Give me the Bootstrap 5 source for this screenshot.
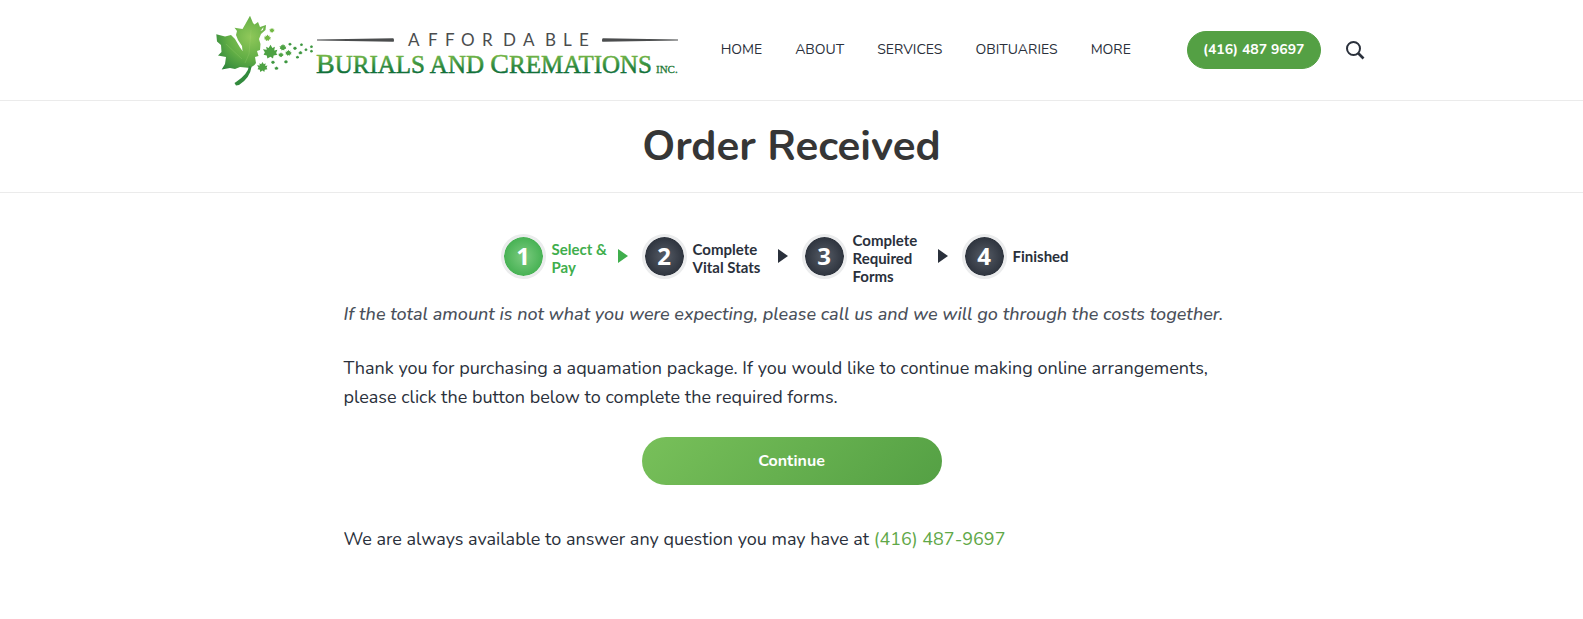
<!DOCTYPE html>
<html lang="en">
<head>
<meta charset="utf-8">
<meta name="viewport" content="width=device-width, initial-scale=1">
<title>Order Received - Affordable Burials and Cremations</title>
<link rel="stylesheet" href="https://cdn.jsdelivr.net/npm/bootstrap@5.3.0/dist/css/bootstrap.min.css">
<style>
  body { font-family: Nunito, "Open Sans", sans-serif; font-size: 18px; line-height: 29px; color: #2a303b; }
  .site-header, .page-title { border-bottom: 1px solid #ebebeb; }
  .header-inner { max-width: 1152px; min-height: 100px; }
  .logo-art { width: 464px; height: 72px; max-width: 100%; }
  .menu { gap: 33px; }
  .menu .nav-link { font-size: 14px; line-height: 20px; color: #2a303b; padding: 0; }
  .header-tools { gap: 24px; margin-left: 56px; margin-right: 3px; }
  .phone-btn { background: #54a044; color: #fff; font-size: 14px; font-weight: 700; line-height: 20px; padding: 8px 15px; border: 1px solid #54a044; }
  .search-btn { color: #2a303b; line-height: 0; }
  .page-title { padding: 22px 0 21px; }
  .page-title h1 { font-size: 42px; line-height: 48px; font-weight: 700; color: #363636; }
  .content { max-width: 896px; padding-top: 34px; }
  .steps { margin-bottom: 15px; }
  .step-no { width: 45px; height: 45px; border: 3px solid #ebeced; color: #fff; font: 700 24px/1 "Open Sans", sans-serif; background: radial-gradient(#565c66, #282e38 70%) border-box; background-clip: padding-box; margin-right: 6px; }
  .step-label { font: 700 15px/18px Lato, sans-serif; width: 85px; padding-top: 4px; }
  .step-label.narrow { width: 66px; }
  .step-label.last { width: 70px; padding-top: 0; }
  .step-now { color: #3fae4d; }
  .step-now .step-no { background-image: radial-gradient(#7ccb80, #3fae4d 70%); }
  .arrow { border-left: 10px solid; border-top: 7px solid transparent; border-bottom: 7px solid transparent; margin-right: 14px; }
  .note { color: #4a505a; font-weight: 500; }
  .copy { margin-bottom: 25px; }
  .continue-btn { width: 300px; height: 48px; color: #fff; font-size: 16px; font-weight: 700; border: 0; background: linear-gradient(135deg, #78c05a, #54a044); margin-bottom: 40px; }
  .continue-btn:hover, .phone-btn:hover { color: #fff; background: #478a3a; }
  .tel-link { color: #5fa848; }
</style>
</head>
<body>
<header class="site-header">
  <div class="header-inner container-fluid px-0 d-flex flex-wrap align-items-center">
    <a href="#" class="d-block lh-1" aria-label="Affordable Burials and Cremations Inc.">
      <svg class="logo-art d-block" viewBox="0 0 464 72">
        <defs>
          <radialGradient id="leaf" gradientUnits="userSpaceOnUse" cx="34" cy="23" r="44">
            <stop offset="0" stop-color="#90c85a"/><stop offset=".5" stop-color="#62ae45"/><stop offset="1" stop-color="#267f3b"/>
          </radialGradient>
          <linearGradient id="word" gradientUnits="userSpaceOnUse" x1="0" y1="40" x2="0" y2="60">
            <stop offset="0" stop-color="#7dbb47"/><stop offset=".45" stop-color="#3f9741"/><stop offset="1" stop-color="#0b6a38"/>
          </linearGradient>
          <path id="bit" d="M0-5l1.500 2.500 2-1-.5 3 2.500-.5-1 2.500 1 1.500-3 .5-.5 2.500-2-1.500-2.500 1.500-.5-2.500-2.500-.5 1-2-1.500-2.500 3 .5-.5-2.500 2 1z"/>
        </defs>
        <path fill="url(#leaf)" d="M34 1.700L37 9l1.500 1.500L42 8l2 5 6-2-.5 5-4.500 4-2 5 1.500 5-.5 6-3 1 1.500 5-3.500 1 1 6-1.500 2-4.500 3-2-.3-8-.7-5 2-5-1-8.300 1.500L9 50l1-7-8-1.500L5.500 38 5 31 1 27.500.3 20.300 9 22.500l6-1.500 4 4 5 8.500 2.500 3.500-.5-5-4-6-2-5 1-4-2.500-3.300L26.500 15l3.200-5.500z"/>
        <path d="M35 16l-2 24-4 9M10 30l16 15" fill="none" stroke="#a4d277" stroke-width=".5" opacity=".5"/>
        <path fill="#328a3d" d="M33 52q-1 8-13 16l-1.500 1 1.500 2.500 3-.5q11-7 12.500-18z"/>
        <path d="M47.500 13l-3 4 2.500-1z" fill="#fff"/>
        <g fill="#72b843">
          <use href="#bit" transform="translate(56 16) scale(.45)"/>
          <use href="#bit" transform="translate(51.500 23.500) scale(.6)"/>
        </g>
        <g fill="#4da243">
          <use href="#bit" transform="translate(54.500 37) scale(1.250)"/>
          <use href="#bit" transform="translate(67 33) scale(.6)"/>
          <use href="#bit" transform="translate(65 40.500) scale(.45)"/>
          <use href="#bit" transform="translate(72.500 38.500) scale(.55)"/>
          <use href="#bit" transform="translate(46.500 52.500) scale(.9)"/>
        </g>
        <g fill="#3c963f">
          <use href="#bit" transform="translate(57 48) scale(.35)"/>
          <use href="#bit" transform="translate(60.500 54) scale(.35)"/>
          <use href="#bit" transform="translate(70 47.500) scale(.35)"/>
          <use href="#bit" transform="translate(74 30) scale(.3)"/>
          <use href="#bit" transform="translate(79 34) scale(.35)"/>
          <use href="#bit" transform="translate(81.500 43) scale(.3)"/>
          <use href="#bit" transform="translate(84.500 38.500) scale(.35)"/>
          <use href="#bit" transform="translate(85.500 30.500) scale(.28)"/>
          <use href="#bit" transform="translate(90 35.500) scale(.28)"/>
          <use href="#bit" transform="translate(95.500 32.500) scale(.28)"/>
          <use href="#bit" transform="translate(95.500 37) scale(.28)"/>
        </g>
        <path d="M101 25.600L177 24.200q1 0 1 2t-1 1.500L101 26.400zM462 25.600L387 24.200q-1 0-1 2t1 1.500L462 26.400z" fill="#4b4d4e"/>
        <text y="32" x="192 212 229 245 266 287 307 329 347 363" font-family="Lato, sans-serif" font-size="17" font-weight="400" fill="#4b4d4e">AFFORDABLE</text>
        <text x="100" y="59" font-family="Liberation Serif, serif" font-size="28" fill="url(#word)" stroke="url(#word)" stroke-width=".5">B<tspan font-size="25">URIALS AND </tspan>C<tspan font-size="25">REMATIONS</tspan></text>
        <text x="440" y="59" font-family="Liberation Serif, serif" font-size="11" fill="#1f7a3a" stroke="#1f7a3a" stroke-width=".3">INC.</text>
      </svg>
    </a>
    <nav class="menu nav ms-auto" aria-label="Main">
      <a class="nav-link" href="#">HOME</a>
      <a class="nav-link" href="#">ABOUT</a>
      <a class="nav-link" href="#">SERVICES</a>
      <a class="nav-link" href="#">OBITUARIES</a>
      <a class="nav-link" href="#">MORE</a>
    </nav>
    <div class="header-tools d-flex align-items-center">
      <a class="phone-btn btn rounded-pill" href="tel:4164879697">(416) 487 9697</a>
      <button class="search-btn btn p-0 border-0" type="button" aria-label="Search">
        <svg width="20" height="20" viewBox="0 0 20 20" fill="none" stroke="currentColor"><circle cx="8.500" cy="8.500" r="6.500" stroke-width="2"/><path d="M13 13l5.500 5.500" stroke-width="2.600"/></svg>
      </button>
    </div>
  </div>
</header>
<section class="page-title text-center">
  <h1 class="m-0">Order Received</h1>
</section>
<main class="content container-fluid px-0">
  <div class="steps d-flex flex-wrap justify-content-center">
    <div class="step-now d-flex align-items-center">
      <span class="step-no rounded-circle d-flex align-items-center justify-content-center">1</span>
      <span class="step-label narrow">Select &amp; Pay</span>
      <span class="arrow"></span>
    </div>
    <div class="d-flex align-items-center">
      <span class="step-no rounded-circle d-flex align-items-center justify-content-center">2</span>
      <span class="step-label">Complete Vital Stats</span>
      <span class="arrow"></span>
    </div>
    <div class="d-flex align-items-center">
      <span class="step-no rounded-circle d-flex align-items-center justify-content-center">3</span>
      <span class="step-label">Complete Required Forms</span>
      <span class="arrow"></span>
    </div>
    <div class="d-flex align-items-center">
      <span class="step-no rounded-circle d-flex align-items-center justify-content-center">4</span>
      <span class="step-label last">Finished</span>
    </div>
  </div>
  <p class="note copy"><em>If the total amount is not what you were expecting, please call us and we will go through the costs together.</em></p>
  <p class="copy">Thank you for purchasing a aquamation package. If you would like to continue making online arrangements, please click the button below to complete the required forms.</p>
  <button class="continue-btn btn rounded-pill d-block mx-auto" type="button">Continue</button>
  <p class="copy">We are always available to answer any question you may have at <a class="tel-link text-decoration-none" href="tel:4164879697">(416) 487-9697</a></p>
</main>
<script src="https://cdn.jsdelivr.net/npm/bootstrap@5.3.0/dist/js/bootstrap.bundle.min.js"></script>
</body>
</html>
